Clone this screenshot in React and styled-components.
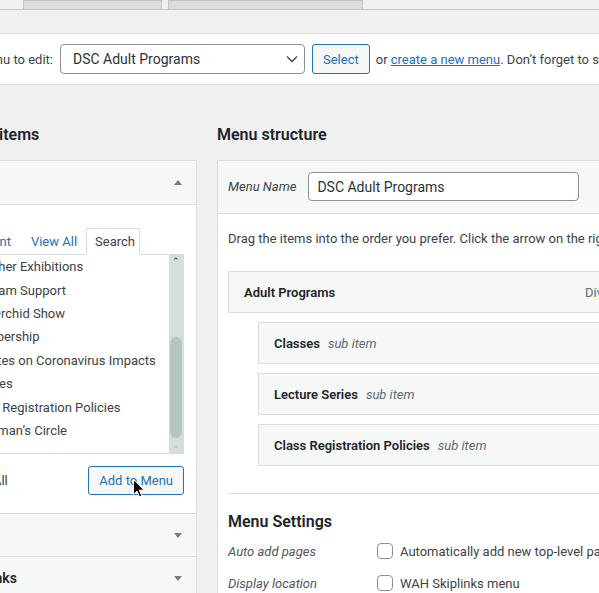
import React from 'react';
import styled, { createGlobalStyle } from 'styled-components';

const GlobalStyle = createGlobalStyle`
    body {
        margin: 0;
        background: #f0f0f1;
        font-family: Roboto, "Liberation Sans", sans-serif;
        color: #3c434a;
        overflow: hidden;
    }
    * { box-sizing: border-box; }
`;

const Page = styled.div`
    margin-left: -100px;
    width: 1200px;
`;

const TabRow = styled.div`
    display: flex;
    align-items: flex-end;
    gap: 6px;
    height: 10px;
    padding-left: 123px;
    border-bottom: 1px solid #c3c4c7;
`;

const TopTab = styled.div`
    width: ${p => p.w}px;
    height: 9px;
    background: #dcdcde;
    border: 1px solid #c3c4c7;
    border-bottom: none;
`;

const Wrap = styled.div`
    padding-left: 16px;
`;

const ManageBar = styled.div`
    display: flex;
    align-items: center;
    margin-top: 23px;
    padding: 10px 0;
    background: #fff;
    border-top: 1px solid #dcdcde;
    border-bottom: 1px solid #dcdcde;
    font-size: 13px;
`;

const BarLabel = styled.span`
    width: 137px;
    text-align: right;
    white-space: nowrap;
`;

const SelectBox = styled.div`
    display: flex;
    align-items: center;
    justify-content: space-between;
    width: 245px;
    height: 30px;
    margin-left: 7px;
    padding: 0 6px 0 12px;
    border: 1px solid #8c8f94;
    border-radius: 4px;
    background: #fff;
    color: #2c3338;
    font-size: 14px;
`;

const Button = styled.div`
    position: relative;
    display: inline-flex;
    align-items: center;
    height: ${p => p.h || 30}px;
    padding: 0 10px;
    border: 1px solid #2271b1;
    border-radius: 3px;
    background: #f6f7f7;
    color: #2271b1;
    font-size: 13px;
    white-space: nowrap;
`;

const BarNote = styled.span`
    margin-left: 6px;
    white-space: nowrap;
    a {
        color: #2271b1;
        text-decoration: underline;
    }
`;

const Columns = styled.div`
    display: flex;
    align-items: flex-start;
`;

const LeftColumn = styled.div`
    width: 281px;
    flex: 0 0 281px;
`;

const RightColumn = styled.div`
    width: 800px;
    margin-left: 20px;
`;

const Heading = styled.h2`
    margin: 39px 0 15px;
    padding-left: ${p => p.indent || 0}px;
    font-size: 16px;
    font-weight: 600;
    line-height: 21px;
    color: #1d2327;
    white-space: nowrap;
`;

const Panel = styled.div`
    background: #fff;
    border: 1px solid #dcdcde;
`;

const SectionHeader = styled.div`
    display: flex;
    align-items: center;
    justify-content: space-between;
    height: ${p => p.h || 44}px;
    padding: 0 14px;
    background: #f6f7f7;
    border-bottom: ${p => (p.last ? 'none' : '1px solid #dcdcde')};
    font-size: 14px;
    font-weight: 600;
    color: #1d2327;
`;

const SectionBody = styled.div`
    padding: 23px 12px 18px;
    border-bottom: 1px solid #dcdcde;
`;

const TabsBar = styled.div`
    display: flex;
    align-items: flex-end;
    justify-content: flex-end;
    padding-right: 44px;
    gap: 1px;
    margin-bottom: -1px;
    position: relative;
    z-index: 1;
`;

const PanelTab = styled.div`
    height: 27px;
    display: flex;
    align-items: center;
    padding: ${p => (p.active ? '0 4px 0 8px' : '0 7px 0 10px')};
    font-size: 13px;
    color: ${p => (p.active ? '#3c434a' : '#2271b1')};
    background: ${p => (p.active ? '#fff' : 'transparent')};
    border: 1px solid ${p => (p.active ? '#dcdcde' : 'transparent')};
    border-bottom-color: ${p => (p.active ? '#fff' : 'transparent')};
    white-space: nowrap;
`;

const ListBox = styled.div`
    display: flex;
    height: 200px;
    border: 1px solid #dcdcde;
    background: #fff;
`;

const ItemList = styled.ul`
    flex: 1;
    margin: 0;
    padding: 0 0 0 12px;
    list-style: none;
    overflow: hidden;
`;

const ListItem = styled.li`
    display: flex;
    align-items: center;
    height: 23.4px;
    font-size: 13px;
    white-space: nowrap;
`;

const Check = styled.span`
    flex: 0 0 16px;
    width: 16px;
    height: 16px;
    margin-right: ${p => p.gap || 9}px;
    border: 1px solid #8c8f94;
    border-radius: 4px;
    background: #fff;
`;

const Scrollbar = styled.div`
    display: flex;
    flex-direction: column;
    align-items: center;
    width: 14px;
    padding: 2px 1px;
    background: #d4dfdb;
`;

const ScrollArrow = styled.span`
    font-size: 9px;
    line-height: 9px;
    height: 10px;
    color: ${p => (p.dim ? '#a9bbb5' : '#2c3338')};
`;

const ScrollThumb = styled.div`
    width: 12px;
    height: 101px;
    margin-top: ${p => p.offset}px;
    border-radius: 6px;
    background: #b3c6c0;
`;

const Actions = styled.div`
    display: flex;
    align-items: center;
    justify-content: space-between;
    margin-top: 12px;
    font-size: 13px;
`;

const SelectAll = styled.label`
    display: flex;
    align-items: center;
`;

const Cursor = styled.svg`
    position: absolute;
    left: 44px;
    top: 12px;
    width: 12px;
    height: 19px;
`;

const StructureBox = styled.div`
    background: #fff;
    border: 1px solid #dcdcde;
`;

const NameHeader = styled.div`
    display: flex;
    align-items: center;
    padding: 11px 10px 12px;
    background: #f6f7f7;
    border-bottom: 1px solid #dcdcde;
`;

const ItalicLabel = styled.span`
    font-size: 13px;
    font-style: italic;
    color: ${p => p.color || '#3c434a'};
    white-space: nowrap;
`;

const NameInput = styled.div`
    width: 271px;
    height: 29px;
    margin-left: 12px;
    padding: 0 8px;
    display: flex;
    align-items: center;
    border: 1px solid #8c8f94;
    border-radius: 4px;
    background: #fff;
    font-size: 14px;
    color: #2c3338;
`;

const StructureBody = styled.div`
    padding: 15px 10px 0;
`;

const Intro = styled.p`
    margin: 0;
    font-size: 13px;
    line-height: 20px;
    white-space: nowrap;
`;

const ItemBar = styled.div`
    display: flex;
    align-items: center;
    width: 560px;
    height: 42px;
    margin: ${p => (p.sub ? '9px 0 0 30px' : '22px 0 0')};
    padding-left: 15px;
    background: #f6f7f7;
    border: 1px solid #dcdcde;
    font-size: 13px;
    white-space: nowrap;
`;

const ItemTitle = styled.span`
    flex: 0 0 ${p => p.w || 'auto'};
    font-weight: 600;
    color: #1d2327;
`;

const SubNote = styled.span`
    margin-left: 8px;
    font-style: italic;
    color: #646970;
`;

const ItemType = styled.span`
    color: #646970;
`;

const Settings = styled.div`
    margin-top: 27px;
    padding-top: 17px;
    border-top: 1px solid #dcdcde;
`;

const SettingsTitle = styled.h3`
    margin: 0 0 3px;
    font-size: 16px;
    font-weight: 600;
    line-height: 21px;
    color: #1d2327;
`;

const SettingRow = styled.div`
    display: grid;
    grid-template-columns: 149px auto;
    align-items: center;
    height: 32px;
`;

const CheckLabel = styled.label`
    display: flex;
    align-items: center;
    font-size: 13px;
    color: #3c434a;
    white-space: nowrap;
`;

const Triangle = ({ up }) => (
    <svg width="8" height="5" viewBox="0 0 8 5">
        <path d={up ? 'M0 5 L4 0 L8 5 Z' : 'M0 0 L4 5 L8 0 Z'} fill="#787c82" />
    </svg>
);

const pages = [
    'All Other Exhibitions',
    'Program Support',
    'The Orchid Show',
    'Membership',
    'Updates on Coronavirus Impacts',
    'Classes',
    'Class Registration Policies',
    'Chairman’s Circle',
];

const subItems = ['Classes', 'Lecture Series', 'Class Registration Policies'];

export default function App() {
    return (
        <Page>
            <GlobalStyle />
            <TabRow>
                <TopTab w={139} />
                <TopTab w={195} />
            </TabRow>
            <Wrap>
                <ManageBar>
                    <BarLabel>Select a menu to edit:</BarLabel>
                    <SelectBox>
                        DSC Adult Programs
                        <svg width="12" height="8" viewBox="0 0 12 8">
                            <path d="M1 1.5 L6 6.5 L11 1.5" fill="none" stroke="#50575e" strokeWidth="1.6" />
                        </svg>
                    </SelectBox>
                    <Button style={{ marginLeft: 7 }}>Select</Button>
                    <BarNote>
                        or <a>create a new menu</a>. Don’t forget to save your changes!
                    </BarNote>
                </ManageBar>

                <Columns>
                    <LeftColumn>
                        <Heading indent={6}>Add menu items</Heading>
                        <Panel>
                            <SectionHeader>
                                Pages
                                <Triangle up />
                            </SectionHeader>
                            <SectionBody>
                                <TabsBar>
                                    <PanelTab>Most Recent</PanelTab>
                                    <PanelTab>View All</PanelTab>
                                    <PanelTab active>Search</PanelTab>
                                </TabsBar>
                                <ListBox>
                                    <ItemList>
                                        {pages.map(p => (
                                            <ListItem key={p}>
                                                <Check gap={9} />
                                                {p}
                                            </ListItem>
                                        ))}
                                    </ItemList>
                                    <Scrollbar>
                                        <ScrollArrow>&#8963;</ScrollArrow>
                                        <ScrollThumb offset={70} />
                                        <ScrollArrow dim style={{ marginTop: 'auto' }}>&#8964;</ScrollArrow>
                                    </Scrollbar>
                                </ListBox>
                                <Actions>
                                    <SelectAll>
                                        <Check gap={9} />
                                        Select All
                                    </SelectAll>
                                    <Button h={29}>
                                        Add to Menu
                                        <Cursor viewBox="0 0 12 19">
                                            <path d="M0.5 0.5 L0.5 15.5 L4 12 L6.5 18 L8.8 17 L6.3 11.2 L11 11.2 Z" fill="#000" stroke="#fff" strokeWidth="1" />
                                        </Cursor>
                                    </Button>
                                </Actions>
                            </SectionBody>
                            <SectionHeader h={43}>
                                Posts
                                <Triangle />
                            </SectionHeader>
                            <SectionHeader h={42} last>
                                Custom Links
                                <Triangle />
                            </SectionHeader>
                        </Panel>
                    </LeftColumn>

                    <RightColumn>
                        <Heading>Menu structure</Heading>
                        <StructureBox>
                            <NameHeader>
                                <ItalicLabel>Menu Name</ItalicLabel>
                                <NameInput>DSC Adult Programs</NameInput>
                            </NameHeader>
                            <StructureBody>
                                <Intro>
                                    Drag the items into the order you prefer. Click the arrow on the right of the item to reveal additional configuration options.
                                </Intro>
                                <ItemBar>
                                    <ItemTitle w="341px">Adult Programs</ItemTitle>
                                    <ItemType>Divi Layout</ItemType>
                                </ItemBar>
                                {subItems.map(s => (
                                    <ItemBar sub key={s}>
                                        <ItemTitle>{s}</ItemTitle>
                                        <SubNote>sub item</SubNote>
                                    </ItemBar>
                                ))}
                                <Settings>
                                    <SettingsTitle>Menu Settings</SettingsTitle>
                                    <SettingRow>
                                        <ItalicLabel color="#50575e">Auto add pages</ItalicLabel>
                                        <CheckLabel>
                                            <Check gap={7} />
                                            Automatically add new top-level pages to this menu
                                        </CheckLabel>
                                    </SettingRow>
                                    <SettingRow>
                                        <ItalicLabel color="#50575e">Display location</ItalicLabel>
                                        <CheckLabel>
                                            <Check gap={7} />
                                            WAH Skiplinks menu
                                        </CheckLabel>
                                    </SettingRow>
                                </Settings>
                            </StructureBody>
                        </StructureBox>
                    </RightColumn>
                </Columns>
            </Wrap>
        </Page>
    );
}
